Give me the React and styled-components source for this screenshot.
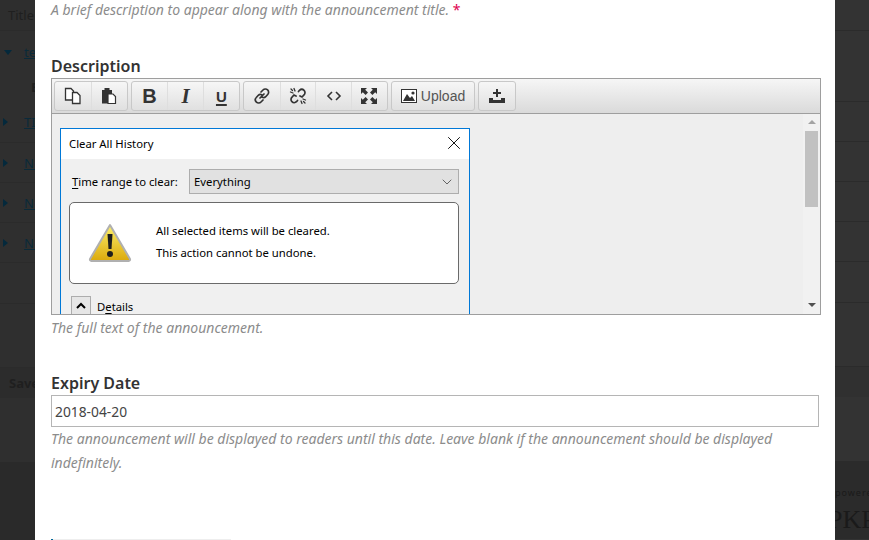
import styled, { createGlobalStyle } from "styled-components";
import { X, ChevronDown } from "lucide-react";

const Global = createGlobalStyle`
  html, body { margin: 0; padding: 0; width: 869px; height: 540px; overflow: hidden; background: #2f2f2f; }
  * { box-sizing: border-box; }
`;

const Page = styled.div`
  width: 869px;
  height: 540px;
  display: flex;
  overflow: hidden;
  font-family: "Noto Sans", "Open Sans", sans-serif;
`;

const Backdrop = styled.div`
  width: ${(p) => p.$width}px;
  flex: none;
  height: 540px;
  overflow: hidden;
  display: flex;
  flex-direction: column;
  background: ${(p) => p.$bg};
  font-size: 13px;
  white-space: nowrap;
`;

const BackRow = styled.div`
  height: ${(p) => p.$h}px;
  flex: none;
  display: flex;
  align-items: center;
  gap: 12px;
  padding-left: ${(p) => p.$pad || 0}px;
  background: ${(p) => p.$bg || "transparent"};
  border-bottom: ${(p) => (p.$line ? "1px solid #2b2b2b" : "none")};
  font-weight: ${(p) => (p.$bold ? 700 : 400)};
  color: #1f1f1f;
`;

const FooterWord = styled.span`
  font-size: 9px;
  letter-spacing: 1px;
  color: #1a1a1a;
`;

const FooterLogo = styled.span`
  margin-left: -7px;
  font-family: "Liberation Serif", serif;
  font-size: 26px;
  color: #1a1a1a;
`;

const BackLink = styled.span`
  color: #0a2a3a;
  text-decoration: underline;
`;

const Caret = styled.span`
  width: 0;
  height: 0;
  flex: none;
  border-style: solid;
  border-color: transparent;
  ${(p) =>
    p.$open
      ? "border-width: 5px 4px 0 4px; border-top-color: #04293c;"
      : "border-width: 4px 0 4px 5px; border-left-color: #04293c; margin-right: 4px;"}
`;

const Modal = styled.div`
  width: 800px;
  flex: none;
  height: 540px;
  overflow: hidden;
  background: #fff;
  padding: 0 16px;
`;

const Hint = styled.div`
  font-size: 14px;
  line-height: 24px;
  font-style: italic;
  color: #8c8c8c;
  margin-top: ${(p) => p.$top || 0}px;
`;

const Required = styled.span`
  color: #e0004f;
  font-style: normal;
`;

const Label = styled.div`
  font-size: 16px;
  line-height: 20px;
  font-weight: 600;
  color: #333;
  margin-top: ${(p) => p.$top}px;
`;

const Editor = styled.div`
  width: 770px;
  height: 237px;
  margin-top: 2px;
  border: 1px solid #9e9e9e;
  display: flex;
  flex-direction: column;
  overflow: hidden;
`;

const Toolbar = styled.div`
  height: 35px;
  flex: none;
  display: flex;
  align-items: flex-start;
  gap: 3px;
  padding: 2px;
  background: linear-gradient(#f6f6f6, #dadada);
  border-bottom: 1px solid #9e9e9e;
`;

const Group = styled.div`
  display: flex;
  height: 30px;
  border: 1px solid #c8c8c8;
  border-radius: 3px;
  background: linear-gradient(#f6f6f6, #e0e0e0);
`;

const Tool = styled.div`
  width: ${(p) => p.$width || 35.75}px;
  display: flex;
  align-items: center;
  justify-content: center;
  gap: 4px;
  color: #555;
  font-family: "Liberation Sans", Arial, sans-serif;
  font-size: 14px;
  & + & { border-left: 1px solid #dedede; }
`;

const Bold = styled.b`
  font-size: 20px;
  color: #333;
`;

const Italic = styled.i`
  font-family: "Liberation Serif", serif;
  font-weight: 700;
  font-size: 21px;
  color: #333;
`;

const Under = styled.span`
  font-size: 15px;
  font-weight: 700;
  color: #333;
  text-decoration: underline;
  text-decoration-thickness: 2px;
  text-underline-offset: 2px;
`;

const EditorBody = styled.div`
  flex: 1;
  min-height: 0;
  display: flex;
  justify-content: space-between;
  background: #eeeeee;
`;

const Dialog = styled.div`
  width: 410px;
  height: 220px;
  flex: none;
  margin: 14px 0 0 8px;
  border: 1px solid #0078d7;
  background: #f0f0f0;
  font-size: 11.3px;
  color: #000;
`;

const DialogTitle = styled.div`
  height: 30px;
  background: #fff;
  display: flex;
  align-items: center;
  justify-content: space-between;
  padding: 0 4px 2px 8px;
`;

const RangeRow = styled.div`
  display: flex;
  align-items: center;
  margin: 10px 10px 0 11px;
  white-space: nowrap;
`;

const RangeLabel = styled.span`
  width: 117px;
  flex: none;
`;

const Key = styled.span`
  text-decoration: underline;
  text-underline-offset: 2px;
`;

const Select = styled.div`
  width: 270px;
  height: 25px;
  display: flex;
  align-items: center;
  justify-content: space-between;
  padding: 0 3px 0 4px;
  background: #e1e1e1;
  border: 1px solid #adadad;
`;

const WarnPanel = styled.div`
  height: 82px;
  margin: 8px 10px 0 8px;
  display: flex;
  align-items: center;
  gap: 24px;
  padding-left: 18px;
  background: #fff;
  border: 1px solid #6a6a6a;
  border-radius: 5px;
`;

const WarnText = styled.div`
  display: flex;
  flex-direction: column;
  gap: 4px;
  line-height: 18px;
  margin-top: -2px;
`;

const DetailsRow = styled.div`
  display: flex;
  align-items: center;
  gap: 6px;
  margin: 12px 0 0 10px;
`;

const DetailsButton = styled.div`
  width: 20px;
  height: 20px;
  display: flex;
  align-items: center;
  justify-content: center;
  background: #e6e6e6;
  border: 1px solid #adadad;
`;

const Scrollbar = styled.div`
  width: 17px;
  flex: none;
  display: flex;
  flex-direction: column;
  align-items: center;
  justify-content: space-between;
  padding: 6px 0 7px;
  background: #f1f1f1;
`;

const Thumb = styled.div`
  width: 13px;
  height: 76px;
  margin-top: 7px;
  margin-bottom: auto;
  background: #c1c1c1;
`;

const Arrow = styled.span`
  width: 0;
  height: 0;
  border-left: 4px solid transparent;
  border-right: 4px solid transparent;
  ${(p) => (p.$down ? "border-top: 4px solid #505050;" : "border-bottom: 4px solid #a3a3a3;")}
`;

const DateInput = styled.div`
  width: 768px;
  height: 32px;
  margin-top: 2px;
  padding: 0 3px;
  display: flex;
  align-items: center;
  border: 1px solid #b5b5b5;
  font-size: 13.8px;
  color: #444;
`;

const Tabs = styled.div`
  width: 180px;
  height: 1px;
  margin-top: 64px;
  background: #eee;
  border-left: 2px solid #006798;
`;

const Svg = ({ children, size = 18, view = "0 0 18 18" }) => (
  <svg width={size} height={size} viewBox={view} fill="none">
    {children}
  </svg>
);

const CopyIcon = () => (
  <Svg>
    <path d="M1.5 1.5h5.5l2.5 2.5v9h-8z" stroke="#333" strokeWidth="1.3" fill="#fff" />
    <path d="M8.5 5.5h4.5l3 3v8h-7.5z" stroke="#333" strokeWidth="1.3" fill="#fff" />
  </Svg>
);

const PasteIcon = () => (
  <Svg>
    <path d="M2 3h2.5V1h5v2H12v13.5H2z" fill="#333" />
    <path d="M8 7h5l2.5 2.5v7H8z" fill="#fff" stroke="#333" strokeWidth="1.2" />
  </Svg>
);

const LinkIcon = () => (
  <Svg>
    <path d="M7 11l4-4M8 5l2-2a3.2 3.2 0 0 1 4.7 4.5l-2 2.2a3 3 0 0 1-3.4.6M10 13l-2 2a3.2 3.2 0 0 1-4.7-4.5l2-2.2a3 3 0 0 1 3.4-.6" stroke="#333" strokeWidth="1.7" strokeLinecap="round" />
  </Svg>
);

const UnlinkIcon = () => (
  <Svg>
    <path d="M9.5 4.5l1-1.2a3.2 3.2 0 0 1 4.5 4.6l-2 2.1-2-1M8.5 13.5l-1 1.2a3.2 3.2 0 0 1-4.5-4.6l2-2.1 2 1" stroke="#333" strokeWidth="1.7" strokeLinecap="round" />
    <path d="M1.5 5l2.5 1M5 1.5L6 4M13 16.5L12 14M16.5 13L14 12M2 2l1.5 1.5M14.5 14.5L16 16" stroke="#333" strokeWidth="1.3" strokeLinecap="round" />
  </Svg>
);

const CodeIcon = () => (
  <Svg>
    <path d="M7 5L3 9l4 4M11 5l4 4-4 4" stroke="#333" strokeWidth="1.6" />
  </Svg>
);

const FullscreenIcon = () => (
  <Svg>
    <path d="M1 1h6L5.2 2.8 8 5.6 5.6 8 2.8 5.2 1 7zM17 1v6l-1.8-1.8L12.4 8 10 5.6l2.8-2.8L11 1zM17 17h-6l1.8-1.8L10 12.4l2.4-2.4 2.8 2.8L17 11zM1 17v-6l1.8 1.8L5.6 10 8 12.4l-2.8 2.8L7 17z" fill="#333" />
  </Svg>
);

const ImageIcon = () => (
  <Svg size={16} view="0 0 16 14">
    <path d="M0 0h16v14H0z" fill="#333" />
    <path d="M1 1h14v12H1z" fill="#fff" />
    <path d="M2 12l4-7 3 4 2-2 3 5z" fill="#333" />
    <circle cx="12" cy="4" r="1.6" fill="#333" />
  </Svg>
);

const InsertIcon = () => (
  <Svg>
    <path d="M8 2h2v3h3v2h-3v3H8V7H5V5h3zM1 11h4v2h8v-2h4v5H1z" fill="#333" />
  </Svg>
);

const WarningIcon = () => (
  <svg width="44" height="40" viewBox="0 0 44 40">
    <defs>
      <linearGradient id="warn" x1="0" y1="0" x2="0" y2="1">
        <stop offset="0" stopColor="#fdf06a" />
        <stop offset="1" stopColor="#dba90c" />
      </linearGradient>
    </defs>
    <path d="M22 2L42 36a1.5 1.5 0 0 1-1.3 2H3.3A1.5 1.5 0 0 1 2 36z" fill="url(#warn)" stroke="#b0b0b0" strokeWidth="2" strokeLinejoin="round" />
    <path d="M19.5 11h5l-1 15h-3z" fill="#1e1e1e" />
    <circle cx="22" cy="31" r="3" fill="#1e1e1e" />
  </svg>
);

const App = () => {
  return (
    <Page>
      <Global />
      <Backdrop $width={35} $bg="#2f2f2f">
        <BackRow $h={31} $pad={8} $bg="#2e2e2e" $line>
          Title
        </BackRow>
        <BackRow $h={42} $pad={4}>
          <Caret $open />
          <BackLink>test</BackLink>
        </BackRow>
        <BackRow $h={28} $pad={31} $bold>
          Edit
        </BackRow>
        <BackRow $h={42} $pad={3} $line>
          <Caret />
          <BackLink>TITLE</BackLink>
        </BackRow>
        <BackRow $h={40} $pad={3} $line>
          <Caret />
          <BackLink>News</BackLink>
        </BackRow>
        <BackRow $h={40} $pad={3} $line>
          <Caret />
          <BackLink>News</BackLink>
        </BackRow>
        <BackRow $h={40} $pad={3} $line>
          <Caret />
          <BackLink>News</BackLink>
        </BackRow>
        <BackRow $h={41} $line />
        <BackRow $h={64} $line />
        <BackRow $h={30} $pad={9} $bold $bg="#2c2c2c">
          Save
        </BackRow>
        <BackRow $h={64} />
        <BackRow $h={78} $bg="#2a2a2a" />
      </Backdrop>

      <Modal>
        <Hint $top={-2}>
          A brief description to appear along with the announcement title. <Required>*</Required>
        </Hint>
        <Label $top={34}>Description</Label>
        <Editor>
          <Toolbar>
            <Group>
              <Tool><CopyIcon /></Tool>
              <Tool><PasteIcon /></Tool>
            </Group>
            <Group>
              <Tool><Bold>B</Bold></Tool>
              <Tool><Italic>I</Italic></Tool>
              <Tool><Under>U</Under></Tool>
            </Group>
            <Group>
              <Tool><LinkIcon /></Tool>
              <Tool><UnlinkIcon /></Tool>
              <Tool><CodeIcon /></Tool>
              <Tool><FullscreenIcon /></Tool>
            </Group>
            <Group>
              <Tool $width={82.6}><ImageIcon />Upload</Tool>
            </Group>
            <Group>
              <Tool><InsertIcon /></Tool>
            </Group>
          </Toolbar>
          <EditorBody>
            <Dialog>
              <DialogTitle>
                Clear All History
                <X size={22} strokeWidth={1} color="#000" />
              </DialogTitle>
              <RangeRow>
                <RangeLabel><Key>T</Key>ime range to clear:</RangeLabel>
                <Select>
                  Everything
                  <ChevronDown size={16} strokeWidth={1.2} color="#444" />
                </Select>
              </RangeRow>
              <WarnPanel>
                <WarningIcon />
                <WarnText>
                  <span>All selected items will be cleared.</span>
                  <span>This action cannot be undone.</span>
                </WarnText>
              </WarnPanel>
              <DetailsRow>
                <DetailsButton>
                  <Svg size={12} view="0 0 12 12">
                    <path d="M2 8l4-4 4 4" stroke="#000" strokeWidth="2" />
                  </Svg>
                </DetailsButton>
                <span>D<Key>e</Key>tails</span>
              </DetailsRow>
            </Dialog>
            <Scrollbar>
              <Arrow />
              <Thumb />
              <Arrow $down />
            </Scrollbar>
          </EditorBody>
        </Editor>
        <Hint $top={1}>The full text of the announcement.</Hint>
        <Label $top={33}>Expiry Date</Label>
        <DateInput>2018-04-20</DateInput>
        <Hint>
          The announcement will be displayed to readers until this date. Leave blank if the announcement should be displayed indefinitely.
        </Hint>
        <Tabs />
      </Modal>

      <Backdrop $width={34} $bg="#333333">
        <BackRow $h={31} $line />
        <BackRow $h={71} $line />
        <BackRow $h={40} $line />
        <BackRow $h={40} $line />
        <BackRow $h={40} $line />
        <BackRow $h={40} $line />
        <BackRow $h={41} $line />
        <BackRow $h={64} $line />
        <BackRow $h={30} $bg="#303030" />
        <BackRow $h={64} />
        <BackRow $h={23} $bg="#2b2b2b" />
        <BackRow $h={16} $bg="#2b2b2b">
          <FooterWord>powered</FooterWord>
        </BackRow>
        <BackRow $h={39} $bg="#2b2b2b">
          <FooterLogo>PKP</FooterLogo>
        </BackRow>
      </Backdrop>
    </Page>
  );
};

export default App;
